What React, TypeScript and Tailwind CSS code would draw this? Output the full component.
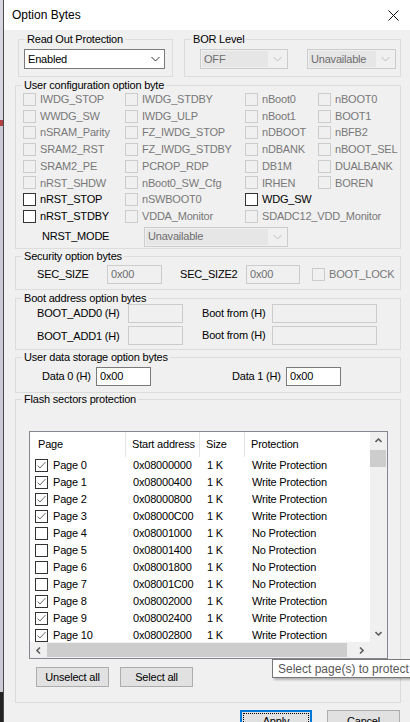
import React from 'react';

type Opt = { label: string; en?: boolean } | null;

const userOpts: Opt[][] = [
  [{ label: 'IWDG_STOP' }, { label: 'IWDG_STDBY' }, { label: 'nBoot0' }, { label: 'nBOOT0' }],
  [{ label: 'WWDG_SW' }, { label: 'IWDG_ULP' }, { label: 'nBoot1' }, { label: 'BOOT1' }],
  [{ label: 'nSRAM_Parity' }, { label: 'FZ_IWDG_STOP' }, { label: 'nDBOOT' }, { label: 'nBFB2' }],
  [{ label: 'SRAM2_RST' }, { label: 'FZ_IWDG_STDBY' }, { label: 'nDBANK' }, { label: 'nBOOT_SEL' }],
  [{ label: 'SRAM2_PE' }, { label: 'PCROP_RDP' }, { label: 'DB1M' }, { label: 'DUALBANK' }],
  [{ label: 'nRST_SHDW' }, { label: 'nBoot0_SW_Cfg' }, { label: 'IRHEN' }, { label: 'BOREN' }],
  [{ label: 'nRST_STOP', en: true }, { label: 'nSWBOOT0' }, { label: 'WDG_SW', en: true }, null],
  [{ label: 'nRST_STDBY', en: true }, { label: 'VDDA_Monitor' }, { label: 'SDADC12_VDD_Monitor' }, null],
];

const pages = [
  { addr: '0x08000000', wp: true },
  { addr: '0x08000400', wp: true },
  { addr: '0x08000800', wp: true },
  { addr: '0x08000C00', wp: true },
  { addr: '0x08001000', wp: false },
  { addr: '0x08001400', wp: false },
  { addr: '0x08001800', wp: false },
  { addr: '0x08001C00', wp: false },
  { addr: '0x08002000', wp: true },
  { addr: '0x08002400', wp: true },
  { addr: '0x08002800', wp: true },
];

function Check({ on, disabled }: { on?: boolean; disabled?: boolean }) {
  return (
    <span
      className={`w-[13px] h-[13px] shrink-0 border flex items-center justify-center ${
        disabled ? 'border-[#cccccc] bg-[#f0f0f0]' : 'border-[#333333] bg-white'
      }`}
    >
      {on && (
        <svg width="11" height="11" viewBox="0 0 11 11">
          <polyline points="1.5,5.5 4,8 9.5,2" fill="none" stroke="#6a6a6a" strokeWidth="1" />
        </svg>
      )}
    </span>
  );
}

function Chevron({ color }: { color: string }) {
  return (
    <svg width="9" height="6" viewBox="0 0 9 6">
      <polyline points="0.5,1 4.5,5 8.5,1" fill="none" stroke={color} strokeWidth="1" />
    </svg>
  );
}

function ScrollArrow({ dir }: { dir: 'down' | 'up' | 'left' | 'right' }) {
  const pts = {
    down: '0.5,1 3.5,4 6.5,1',
    up: '0.5,4 3.5,1 6.5,4',
    left: '4,0.5 1,3.5 4,6.5',
    right: '1,0.5 4,3.5 1,6.5',
  }[dir];
  const vertical = dir === 'down' || dir === 'up';
  return (
    <svg width={vertical ? 7 : 5} height={vertical ? 5 : 7} viewBox={vertical ? '0 0 7 5' : '0 0 5 7'}>
      <polyline points={pts} fill="none" stroke="#606060" strokeWidth="1.6" />
    </svg>
  );
}

function Combo({ value, disabled, className }: { value: string; disabled?: boolean; className?: string }) {
  if (disabled) {
    return (
      <div className={`h-[20px] border border-[#cccccc] bg-[#f0f0f0] p-[1px] flex ${className}`}>
        <div className="flex-1 bg-[#e6e6e6] pl-[2px] flex items-center text-[#6d6d6d] whitespace-nowrap overflow-hidden">
          {value}
        </div>
        <div className="w-[18px] flex items-center justify-center">
          <Chevron color="#bcbcbc" />
        </div>
      </div>
    );
  }
  return (
    <div className={`h-[20px] border border-[#7a7a7a] bg-white flex ${className}`}>
      <div className="flex-1 pl-[3px] flex items-center">{value}</div>
      <div className="w-[18px] flex items-center justify-center">
        <Chevron color="#333333" />
      </div>
    </div>
  );
}

function Field({ value, disabled, className }: { value?: string; disabled?: boolean; className?: string }) {
  return (
    <div
      className={`h-[19px] shrink-0 border flex items-center pl-[3px] ${
        disabled ? 'border-[#cccccc] bg-[#f0f0f0] text-[#6d6d6d]' : 'border-[#7a7a7a] bg-white text-black'
      } ${className}`}
    >
      {value}
    </div>
  );
}

function Group({ title, className, children }: { title: string; className?: string; children?: React.ReactNode }) {
  return (
    <fieldset className={`border border-[#dcdcdc] ${className}`}>
      <legend className="ml-[6px] px-[2px] leading-[12px]">{title}</legend>
      {children}
    </fieldset>
  );
}

function WinButton({ label, className }: { label: string; className?: string }) {
  return (
    <div className={`h-[20px] border border-[#adadad] bg-[#e1e1e1] flex items-center justify-center ${className}`}>
      {label}
    </div>
  );
}

export default function App() {
  return (
    <div className="relative w-[410px] h-[722px] overflow-hidden flex bg-[#f0f0f0] font-['Liberation_Sans',Arial,sans-serif] text-[11px] tracking-[-0.2px] text-black">
      <div className="w-[3px] shrink-0 flex flex-col">
        <div className="h-[120px] bg-[#d6d7df]" />
        <div className="h-[6px] bg-[#b24040]" />
        <div className="flex-1 bg-[#c9cad6]" />
        <div className="h-[30px] bg-[#222222]" />
      </div>

      <div className="flex-1 flex flex-col border-l border-[#4a4a4a] min-w-0">
        <div className="h-[30px] shrink-0 bg-white flex items-center justify-between pl-[8px] pr-[11px]">
          <span className="text-[12px] tracking-normal">Option Bytes</span>
          <svg width="11" height="11" viewBox="0 0 11 11">
            <line x1="0.5" y1="0.5" x2="10.5" y2="10.5" stroke="#111" strokeWidth="1" />
            <line x1="10.5" y1="0.5" x2="0.5" y2="10.5" stroke="#111" strokeWidth="1" />
          </svg>
        </div>

        <div className="flex-1 pl-[11px] pr-[9px] pt-[3px] flex flex-col">
          {/* top row */}
          <div className="flex">
            <Group title="Read Out Protection" className="ml-[3px] w-[155px] h-[44px]">
              <Combo value="Enabled" className="mt-[4px] ml-[5px] w-[141px]" />
            </Group>
            <Group title="BOR Level" className="ml-[11px] w-[217px] h-[44px]">
              <div className="flex mt-[4px]">
                <Combo value="OFF" disabled className="ml-[15px] w-[88px]" />
                <Combo value="Unavailable" disabled className="ml-[19px] w-[89px]" />
              </div>
            </Group>
          </div>

          {/* user configuration */}
          <Group title="User configuration option byte" className="mt-[2px] h-[170px]">
            <div className="ml-[7px] grid grid-cols-[102px_120px_73px_1fr] auto-rows-[16.7px]">
              {userOpts.flat().map((o, i) =>
                o ? (
                  <div key={i} className="flex items-center whitespace-nowrap">
                    <Check disabled={!o.en} />
                    <span className={`ml-[4px] ${o.en ? 'text-black' : 'text-[#787878]'}`}>{o.label}</span>
                  </div>
                ) : (
                  <div key={i} />
                ),
              )}
            </div>
            <div className="flex items-center mt-[2px]">
              <span className="ml-[26px] w-[102px]">NRST_MODE</span>
              <Combo value="Unavailable" disabled className="w-[144px]" />
            </div>
          </Group>

          {/* security */}
          <Group title="Security option bytes" className="mt-[1px] h-[40px]">
            <div className="flex items-center mt-[3px] whitespace-nowrap">
              <span className="ml-[21px] w-[70px]">SEC_SIZE</span>
              <Field value="0x00" disabled className="w-[55px]" />
              <span className="ml-[18px] w-[66px]">SEC_SIZE2</span>
              <Field value="0x00" disabled className="w-[54px]" />
              <span className="ml-[12px]">
                <Check disabled />
              </span>
              <span className="ml-[4px] text-[#787878]">BOOT_LOCK</span>
            </div>
          </Group>

          {/* boot address */}
          <Group title="Boot address option bytes" className="mt-[2px] h-[58px]">
            <div className="flex items-center whitespace-nowrap">
              <span className="ml-[21px] w-[91px]">BOOT_ADD0 (H)</span>
              <Field disabled className="w-[55px]" />
              <span className="ml-[19px] w-[70px]">Boot from (H)</span>
              <Field disabled className="w-[105px]" />
            </div>
            <div className="flex items-center mt-[3px] whitespace-nowrap">
              <span className="ml-[21px] w-[91px] pt-[1px]">BOOT_ADD1 (H)</span>
              <Field disabled className="w-[55px]" />
              <span className="ml-[19px] w-[70px]">Boot from (H)</span>
              <Field disabled className="w-[105px]" />
            </div>
          </Group>

          {/* user data */}
          <Group title="User data storage option bytes" className="mt-[1px] h-[42px]">
            <div className="flex items-center mt-[4px] whitespace-nowrap">
              <span className="ml-[26px] w-[54px]">Data 0 (H)</span>
              <Field value="0x00" className="w-[55px]" />
              <span className="ml-[81px] w-[54px]">Data 1 (H)</span>
              <Field value="0x00" className="w-[55px]" />
            </div>
          </Group>

          {/* flash sectors */}
          <Group title="Flash sectors protection" className="h-[310px]">
            <div className="mt-[26px] ml-[13px] w-[359px] h-[228px] border border-[#828790] bg-white flex flex-col">
              <div className="flex flex-1 min-h-0">
                <div className="flex-1 overflow-hidden">
                  <div className="h-[25px] flex items-center">
                    <div className="w-[96px] pl-[8px] h-full flex items-center border-r border-[#e5e5e5]">Page</div>
                    <div className="w-[74px] pl-[6px] h-full flex items-center border-r border-[#e5e5e5] whitespace-nowrap">
                      Start address
                    </div>
                    <div className="w-[45px] pl-[6px] h-full flex items-center border-r border-[#e5e5e5]">Size</div>
                    <div className="flex-1 pl-[6px]">Protection</div>
                  </div>
                  {pages.map((p, i) => (
                    <div key={i} className="h-[17px] flex items-center whitespace-nowrap">
                      <div className="w-[96px] pl-[5px] flex items-center">
                        <Check on={p.wp} />
                        <span className="ml-[5px]">Page {i}</span>
                      </div>
                      <div className="w-[74px] pl-[7px]">{p.addr}</div>
                      <div className="w-[45px] pl-[7px]">1 K</div>
                      <div className="flex-1 pl-[7px]">{p.wp ? 'Write Protection' : 'No Protection'}</div>
                    </div>
                  ))}
                </div>
                <div className="w-[17px] bg-[#f0f0f0] flex flex-col">
                  <div className="h-[17px] flex items-center justify-center">
                    <ScrollArrow dir="up" />
                  </div>
                  <div className="h-[17px] mt-[1px] mr-[1px] bg-[#cdcdcd]" />
                  <div className="flex-1" />
                  <div className="h-[17px] flex items-center justify-center">
                    <ScrollArrow dir="down" />
                  </div>
                </div>
              </div>
              <div className="h-[16px] flex bg-[#f0f0f0]">
                <div className="w-[17px] flex items-center justify-center">
                  <ScrollArrow dir="left" />
                </div>
                <div className="w-[300px] my-[1px] bg-[#cdcdcd]" />
                <div className="flex-1" />
                <div className="w-[17px] flex items-center justify-center">
                  <ScrollArrow dir="right" />
                </div>
                <div className="w-[17px]" />
              </div>
            </div>
            <div className="flex mt-[8px] ml-[20px] gap-[11px]">
              <WinButton label="Unselect all" className="w-[73px]" />
              <WinButton label="Select all" className="w-[73px]" />
            </div>
          </Group>

          <div className="flex justify-end gap-[15px] mt-[7px] pr-[1px]">
            <div className="w-[72px] h-[23px] border-2 border-[#0078d7] bg-[#e1e1e1] p-[1px]">
              <div className="h-full border border-dotted border-black flex items-center justify-center">Apply</div>
            </div>
            <div className="w-[73px] h-[23px] border border-[#adadad] bg-[#e1e1e1] flex items-center justify-center">
              Cancel
            </div>
          </div>
        </div>
      </div>

      <div className="absolute left-[272px] top-[659px] h-[19px] border border-[#767676] bg-white pl-[5px] pr-[6px] flex items-center whitespace-nowrap text-[12px] tracking-normal text-[#575757] shadow-[2px_2px_2px_rgba(0,0,0,0.25)]">
        Select page(s) to protect
      </div>
    </div>
  );
}
